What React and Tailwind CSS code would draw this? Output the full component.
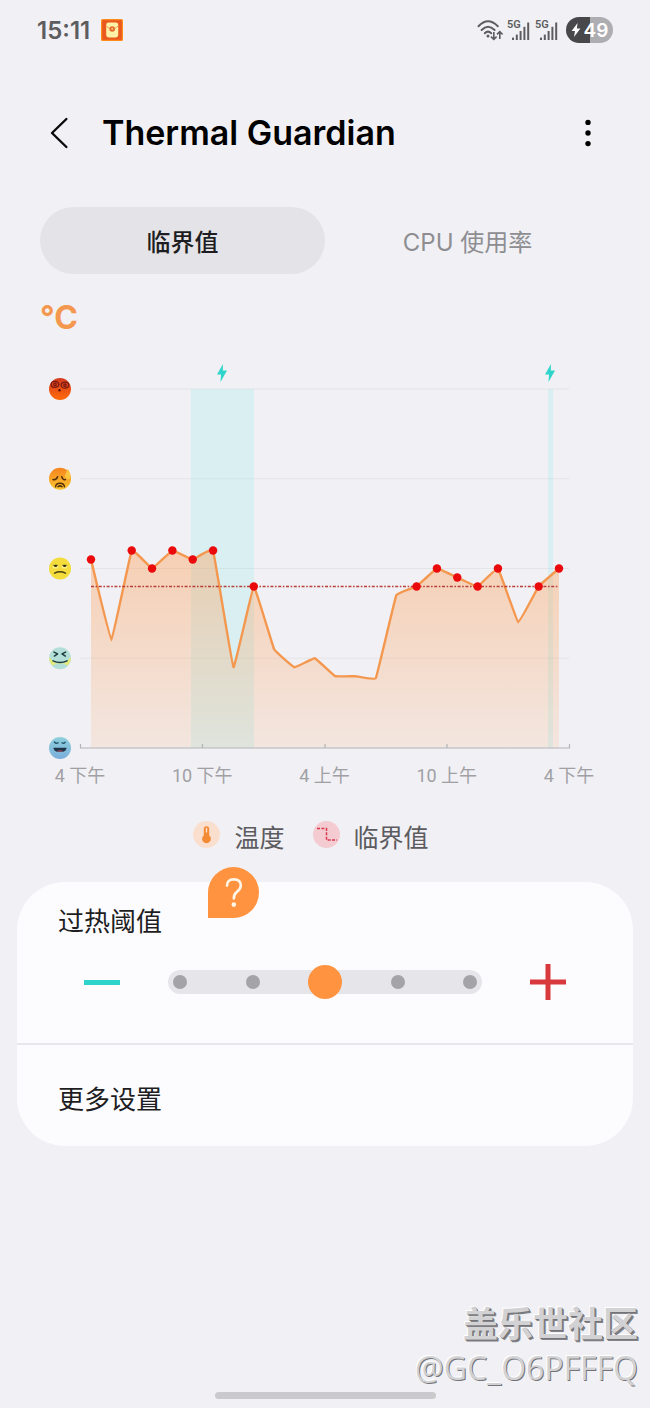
import { useState } from "react";

const latin = "font-[Inter,'Noto_Sans_CJK_SC',sans-serif]";

// degrees above the lowest axis mark, one reading per hour
const readings = [
  21, 12, 22, 20, 22, 21, 22, 9, 18, 11, 9, 10, 8, 8, 7.8, 17, 18, 20, 19, 18,
  20, 14, 18, 20,
];
const limit = 18;
const hours = ["4 下午", "10 下午", "4 上午", "10 上午", "4 下午"];

const plot = { left: 40, right: 529, top: 29, bottom: 388 };
const toX = (i) => 51 + (i * 468) / (readings.length - 1);
const toY = (v) => plot.bottom - (v * (plot.bottom - plot.top)) / 40;

const points = readings.map((v, i) => [toX(i), toY(v)]);

// slightly rounded line through all points
const buildLine = () => {
  const k = 0.03;
  let d = `M${points[0][0]} ${points[0][1]}`;
  for (let i = 1; i < points.length; i++) {
    const before = points[i - 2] || points[i - 1];
    const a = points[i - 1];
    const b = points[i];
    const after = points[i + 1] || b;
    d += ` C${a[0] + (b[0] - before[0]) * k} ${a[1] + (b[1] - before[1]) * k}`;
    d += ` ${b[0] - (after[0] - a[0]) * k} ${b[1] - (after[1] - a[1]) * k}`;
    d += ` ${b[0]} ${b[1]}`;
  }
  return d;
};

const line = buildLine();
const area = `${line} V${plot.bottom} H${points[0][0]} Z`;

const Bolt = ({ x, y }) => (
  <path
    transform={`translate(${x} ${y})`}
    d="M1 -9 L-5 1.5 H-1 L-1.5 9 L5 -2.5 H0.8 Z"
    fill="#2fd5ca"
  />
);

// faces on the vertical axis, hottest first
const faces = [
  <g key="dizzy">
    <circle r="11" fill="url(#faceHot)" />
    <g fill="none" stroke="#7a1a12" strokeWidth="1.3">
      <ellipse cx="-5" cy="-4.6" rx="3.8" ry="3" />
      <circle cx="-5" cy="-4.6" r="1.2" />
      <ellipse cx="5" cy="-3.8" rx="3.8" ry="3" />
      <circle cx="5" cy="-3.8" r="1.2" />
    </g>
    <circle cx="-0.5" cy="1.2" r="1.2" fill="#5a0f08" />
  </g>,
  <g key="sweat">
    <circle r="11" fill="url(#faceWarm)" />
    <g fill="none" stroke="#53300b" strokeWidth="1.5" strokeLinecap="round">
      <path d="M-7 0.8 Q-3.6 1.6 -2.4 -2" />
      <path d="M5.4 0.8 Q2.8 1.6 1.8 -2" />
      <path d="M-4.4 8 Q-4 4.6 0 4.6 Q4 4.6 4.4 8" />
      <path d="M-2 8 Q0 6.2 2 8" />
    </g>
    <path d="M8 -10 Q4.6 -4 5 -1.4 Q7.8 2 10.6 -1 Q11.2 -4 8 -10 Z" fill="#fbc540" />
  </g>,
  <g key="sad">
    <circle r="11" fill="#f3dc3c" />
    <ellipse cx="-4.6" cy="-2" rx="2.8" ry="2" fill="#fbf08a" />
    <ellipse cx="4.4" cy="-2" rx="2.8" ry="2" fill="#fbf08a" />
    <path d="M-7.2 -3.2 H-2 M2 -3.2 H7.2" stroke="#8a7616" strokeWidth="1" />
    <ellipse cx="-4.4" cy="-2.6" rx="1.6" ry="1.1" fill="#33300c" />
    <ellipse cx="4.6" cy="-2.6" rx="1.6" ry="1.1" fill="#33300c" />
    <path d="M-5.4 4.6 Q0 1.8 5.4 4.6" fill="none" stroke="#4a4110" strokeWidth="1.6" strokeLinecap="round" />
  </g>,
  <g key="laugh">
    <circle r="11" fill="#b4dfd8" />
    <path d="M-10.8 -1 Q-9 0 -6.5 4 Q0 7 6.5 4 Q9 0 10.8 -1 Q11 4 7.5 7.2 Q0 3 -7.5 7.2 Q-11 4 -10.8 -1 Z" fill="#e6ea78" />
    <g fill="none" stroke="#1f3c3c" strokeWidth="1.5" strokeLinecap="round" strokeLinejoin="round">
      <path d="M-6 -6.2 L-2.4 -4.4 L-5.6 -2.2" />
      <path d="M5.6 -6.2 L2 -4.4 L5.4 -2.2" />
      <path d="M-7 2.6 Q0 5.8 7 2.6" />
    </g>
  </g>,
  <g key="cold">
    <circle r="11" fill="url(#faceCold)" />
    <g fill="none" stroke="#24506b" strokeWidth="1.3" strokeLinecap="round">
      <path d="M-5.6 -6 Q-4 -4 -1.8 -5.2" />
      <path d="M2 -5.2 Q3.6 -4 5.2 -5.8" />
    </g>
    <path d="M-6.6 -0.2 H6.6 Q6 3.4 3 3.8 H-3 Q-6 3.4 -6.6 -0.2 Z" fill="#1d3447" />
    <ellipse cx="0" cy="3" rx="3" ry="0.8" fill="#9b4a5c" />
  </g>,
];

const Signal = () => (
  <div className="ml-1 flex h-[22px] w-6">
    <span className="-mr-[9px] font-[Roboto,sans-serif] text-[11px] font-semibold leading-[12px] text-[#5d5d60]">
      5G
    </span>
    <svg className="mt-[2px] shrink-0" width="18" height="19" viewBox="0 0 18 19" aria-hidden="true">
      <g fill="#5d5d60">
        <rect x="0" y="16.6" width="2" height="2.4" />
        <rect x="3.8" y="13.6" width="2" height="5.4" />
        <rect x="7.6" y="10" width="2" height="9" />
        <rect x="11.4" y="5.8" width="2" height="13.2" />
        <rect x="15.2" y="1.5" width="2" height="17.5" />
      </g>
    </svg>
  </div>
);

const StatusBar = () => (
  <div className="flex h-[60px] items-center justify-between px-[37px]">
    <div className="flex items-center gap-[11px]">
      <span className={`${latin} pt-[2px] text-[24px] font-semibold leading-none text-[#5d5d60]`}>
        15:11
      </span>
      <svg width="22" height="22" viewBox="0 0 22 22" aria-hidden="true">
        <rect width="22" height="22" rx="1.5" fill="#ff8c1a" />
        <rect x="1.2" y="1.2" width="19.6" height="19.6" fill="#e9591f" />
        <rect x="5.2" y="3.4" width="12" height="15" rx="2.4" fill="#fff0a8" />
        <path d="M5.2 7 Q11.2 13 17.2 7" fill="none" stroke="#f0a050" strokeWidth="1" />
        <circle cx="11.2" cy="10" r="2.8" fill="#e46a2c" />
        <circle cx="11.2" cy="9.8" r="1" fill="#ffc88a" />
      </svg>
    </div>
    <div className="flex items-center">
      <svg width="27" height="22" viewBox="0 0 27 22" aria-hidden="true">
        <g fill="none" stroke="#5d5d60" strokeWidth="2" strokeLinecap="round">
          <path d="M2.5 7.2 Q12 -2.6 21.8 7.2" />
          <path d="M5.6 11 Q12 4.4 18.6 11" />
          <path d="M8.8 14.2 Q12 11 15.2 14.2" />
        </g>
        <circle cx="12" cy="17" r="1.5" fill="#5d5d60" />
        <g fill="none" stroke="#5d5d60" strokeWidth="1.6">
          <path d="M17.8 13 V20.4 M15 17.6 L17.8 20.4 L20.6 17.6" />
          <path d="M23.8 20 V12.6 M21 15.4 L23.8 12.6 L26.6 15.4" />
        </g>
      </svg>
      <Signal />
      <Signal />
      <div className="ml-[7px] flex h-[26px] w-[47px] items-center justify-center rounded-full bg-linear-to-r from-[#48484a] from-50% to-[#aeaeb2] to-50%">
        <svg width="10" height="16" viewBox="0 0 10 16" aria-hidden="true">
          <path d="M6.6 1 L0.6 9 H4 L3 15 L9.4 6.4 H5.8 Z" fill="#fff" />
        </svg>
        <span className={`${latin} ml-[3px] text-[19px] font-semibold leading-none text-white`}>
          49
        </span>
      </div>
    </div>
  </div>
);

const Header = () => (
  <header className="flex h-[147px] items-center justify-between pl-[45px] pr-[50px] pb-[2px]">
    <div className="flex items-center gap-[29px]">
      <button type="button" aria-label="返回" className="flex h-10 w-7 items-center justify-center">
        <svg width="20" height="34" viewBox="0 0 20 34" aria-hidden="true">
          <path
            d="M17.4 3 L3 17 L17.4 31"
            fill="none"
            stroke="#0a0a0a"
            strokeWidth="2.4"
            strokeLinecap="round"
            strokeLinejoin="round"
          />
        </svg>
      </button>
      <h1 className={`${latin} text-[34px] font-semibold leading-10 text-black`}>
        Thermal Guardian
      </h1>
    </div>
    <button type="button" aria-label="更多选项" className="flex h-10 w-6 items-center justify-center">
      <svg width="6" height="28" viewBox="0 0 6 28" aria-hidden="true">
        <circle cx="3" cy="3.4" r="2.7" />
        <circle cx="3" cy="14" r="2.7" />
        <circle cx="3" cy="24.6" r="2.7" />
      </svg>
    </button>
  </header>
);

const Tabs = ({ tab, onChange }) => {
  const base = `${latin} h-[67px] flex-1 rounded-full pt-1 text-[24px] leading-8`;
  const on = "bg-[#e4e4e8] font-medium text-[#1e1e22]";
  const off = "text-[#8e8e92]";
  return (
    <div role="tablist" className="mx-10 flex">
      <button
        type="button"
        role="tab"
        aria-selected={tab === "limit"}
        onClick={() => onChange("limit")}
        className={`${base} ${tab === "limit" ? on : off}`}
      >
        临界值
      </button>
      <button
        type="button"
        role="tab"
        aria-selected={tab === "cpu"}
        onClick={() => onChange("cpu")}
        className={`${base} ${tab === "cpu" ? on : off}`}
      >
        CPU 使用率
      </button>
    </div>
  );
};

const Chart = () => (
  <svg className="block h-auto w-full" viewBox="0 0 570 432" role="img" aria-label="温度">
    <defs>
      <linearGradient id="heat" x1="0" y1="190" x2="0" y2="388" gradientUnits="userSpaceOnUse">
        <stop offset="0" stopColor="#ff9340" stopOpacity="0.36" />
        <stop offset="1" stopColor="#ff9340" stopOpacity="0.12" />
      </linearGradient>
      <linearGradient id="faceHot" x1="0" y1="0" x2="0" y2="1">
        <stop offset="0" stopColor="#d33a22" />
        <stop offset="1" stopColor="#ff6a0a" />
      </linearGradient>
      <linearGradient id="faceWarm" x1="0" y1="0" x2="0" y2="1">
        <stop offset="0" stopColor="#f5831f" />
        <stop offset="1" stopColor="#fcc62d" />
      </linearGradient>
      <linearGradient id="faceCold" x1="0" y1="0" x2="0" y2="1">
        <stop offset="0" stopColor="#8ed0dc" />
        <stop offset="1" stopColor="#7aaedb" />
      </linearGradient>
    </defs>

    {[40, 30, 20, 10].map((v) => (
      <line
        key={v}
        x1={plot.left}
        x2={plot.right}
        y1={toY(v)}
        y2={toY(v)}
        stroke="#e4e4e8"
        strokeWidth="1.2"
      />
    ))}

    {/* charging periods */}
    <rect x="151" y={plot.top} width="63" height="359" fill="#8feaea" fillOpacity="0.23" />
    <rect x="508" y={plot.top} width="5" height="359" fill="#8feaea" fillOpacity="0.23" />
    <Bolt x={182} y={13} />
    <Bolt x={510} y={13} />

    <path d={area} fill="url(#heat)" />
    <path d={line} fill="none" stroke="#f4974f" strokeWidth="2.4" strokeLinejoin="round" />
    <line
      x1={points[0][0]}
      x2={points[points.length - 1][0]}
      y1={toY(limit)}
      y2={toY(limit)}
      stroke="#b8403a"
      strokeWidth="1.4"
      strokeDasharray="3 1.6 1.6 1.6"
    />
    {points.map(([x, y], i) =>
      readings[i] >= limit ? <circle key={i} cx={x} cy={y} r="4.2" fill="#ea0a0c" /> : null
    )}

    <path
      d="M40.5 384 V388 H529.5 V384 M162.5 384 V388 M285 384 V388 M407 384 V388"
      fill="none"
      stroke="#b4b4b8"
      strokeWidth="1.2"
    />
    {hours.map((hour, i) => (
      <text
        key={i}
        x={plot.left + (i * (plot.right - plot.left)) / 4}
        y="422"
        textAnchor="middle"
        className="fill-[#a0a0a4] font-[Roboto,'Noto_Sans_CJK_SC',sans-serif] text-[18px]"
      >
        {hour}
      </text>
    ))}

    {faces.map((face, i) => (
      <g key={i} transform={`translate(20 ${toY(40 - i * 10)})`}>
        {face}
      </g>
    ))}
  </svg>
);

const Legend = () => (
  <div className="mt-6 flex items-center justify-center gap-7 pr-7 text-[25px] leading-10 text-[#5c5c60]">
    <div className="flex items-center gap-[14px]">
      <svg className="-mt-1" width="27" height="27" viewBox="0 0 27 27" aria-hidden="true">
        <circle cx="13.5" cy="13.5" r="13.5" fill="#fadfcf" />
        <path d="M10.8 8 Q10.8 5.2 13.5 5.2 Q16.2 5.2 16.2 8 V14.4 A4.4 4.4 0 1 1 10.8 14.4 Z" fill="#f58a35" />
        <path d="M13.5 7.4 V11" stroke="#fadfcf" strokeWidth="1.4" strokeLinecap="round" />
      </svg>
      温度
    </div>
    <div className="flex items-center gap-[14px]">
      <svg className="-mt-1" width="27" height="27" viewBox="0 0 27 27" aria-hidden="true">
        <circle cx="13.5" cy="13.5" r="13.5" fill="#f3cbd0" />
        <path
          d="M4 7.6 H13.5 V19 H24"
          fill="none"
          stroke="#d93a4e"
          strokeWidth="1.5"
          strokeDasharray="3 1.4"
        />
      </svg>
      临界值
    </div>
  </div>
);

const LevelSlider = ({ level, onChange }) => (
  <div className="relative mx-12 flex h-6 flex-1 items-center justify-between rounded-full bg-[#e6e6ea] px-[5px]">
    {[0, 1, 2, 3, 4].map((n) => (
      <span key={n} className="size-[14px] rounded-full bg-[#a4a4a8]" />
    ))}
    <input
      id="level"
      type="range"
      min="0"
      max="4"
      value={level}
      onChange={(e) => onChange(Number(e.target.value))}
      className="absolute -inset-x-[5px] inset-y-0 cursor-pointer appearance-none bg-transparent [&::-webkit-slider-thumb]:size-[34px] [&::-webkit-slider-thumb]:appearance-none [&::-webkit-slider-thumb]:rounded-full [&::-webkit-slider-thumb]:bg-[#ff9340]"
    />
  </div>
);

const App = () => {
  const [tab, setTab] = useState("limit");
  const [level, setLevel] = useState(2);

  return (
    <div className="flex min-h-screen flex-col bg-[#f1f1f5] font-['Noto_Sans_CJK_SC',sans-serif]">
      <StatusBar />
      <Header />
      <Tabs tab={tab} onChange={setTab} />

      <main>
        <div className="px-10 pt-6">
          <p className={`${latin} mb-[22px] text-[32px] font-bold leading-10 text-[#f4974f]`}>
            °C
          </p>
          <Chart />
        </div>
        <Legend />

        <section className="relative mx-[17px] mt-[26px] rounded-[48px] bg-[#fcfcff]">
          <button
            type="button"
            aria-label="帮助"
            className="absolute -top-[15px] left-[191px] flex size-[51px] items-center justify-center rounded-full rounded-bl-none bg-[#ff9340]"
          >
            <svg width="20" height="32" viewBox="0 0 20 32" aria-hidden="true">
              <path
                d="M3 8.6 Q3 2.4 9.8 2.4 Q16.8 2.4 16.8 8.6 Q16.8 12 13.2 14.6 Q9.8 17 9.8 21.4"
                fill="none"
                stroke="#fff6e8"
                strokeWidth="2.6"
                strokeLinecap="round"
              />
              <circle cx="9.8" cy="27.6" r="2.3" fill="#fff6e8" />
            </svg>
          </button>
          <div className="h-[163px] border-b-2 border-[#e8e8ec] px-[41px] pt-5">
            <label htmlFor="level" className="block text-[26px] leading-9 text-[#1e1e22]">
              过热阈值
            </label>
            <div className="mt-[26px] flex items-center px-[26px]">
              <button
                type="button"
                aria-label="降低"
                onClick={() => setLevel(Math.max(0, level - 1))}
                className="flex size-9 items-center"
              >
                <span className="h-[5px] w-9 bg-[#2fd5ca]" />
              </button>
              <LevelSlider level={level} onChange={setLevel} />
              <button
                type="button"
                aria-label="升高"
                onClick={() => setLevel(Math.min(4, level + 1))}
                className="size-9"
              >
                <svg width="36" height="36" viewBox="0 0 36 36" aria-hidden="true">
                  <path d="M18 0 V36 M0 18 H36" stroke="#d8393c" strokeWidth="5" />
                </svg>
              </button>
            </div>
          </div>
          <button
            type="button"
            className="block h-[101px] w-full px-[41px] pt-1 text-left text-[26px] leading-9 text-[#1e1e22]"
          >
            更多设置
          </button>
        </section>
      </main>

      <footer className="mt-auto flex flex-col pb-[9px]">
        <div className="px-3 pb-[2px] text-right text-[#d2d2d4] [text-shadow:1px_1px_0_#747478,2px_2px_0_#848488,-1px_-1px_0_#ffffff]">
          <p className="text-[35px] font-bold leading-[48px]">盖乐世社区</p>
          <p className="font-['Open_Sans',sans-serif] text-[32px] leading-[44px] [text-shadow:1px_1px_0_#747478,-1px_-1px_0_#ffffff]">
            @GC_O6PFFFQ
          </p>
        </div>
        <div className="mx-auto h-[7px] w-[221px] rounded-full bg-[#cacacc]" />
      </footer>
    </div>
  );
};

export default App;
